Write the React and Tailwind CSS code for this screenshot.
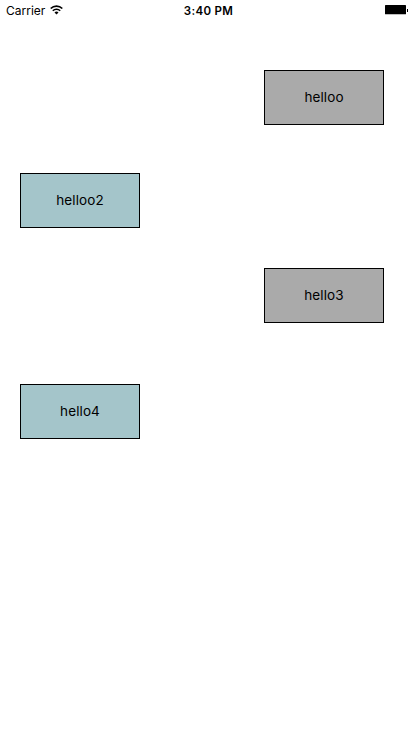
const boxes = [
  { text: 'helloo', cls: 'mt-[50px] ml-[264px] bg-[#aaaaaa]' },
  { text: 'helloo2', cls: 'mt-12 ml-5 bg-[#a4c5ca]' },
  { text: 'hello3', cls: 'mt-10 ml-[264px] bg-[#aaaaaa]' },
  { text: 'hello4', cls: 'mt-[61px] ml-5 bg-[#a4c5ca]' },
];

function Wifi() {
  return (
    <svg className="ml-[5px]" width="13" height="10" viewBox="0 0 13 10" fill="none" stroke="#000">
      <path d="M.7 3.5a8.3 8.3 0 0 1 11.6 0" strokeWidth="1.7" />
      <path d="M2.8 5.8a5.3 5.3 0 0 1 7.4 0" strokeWidth="1.6" />
      <path d="M6.5 9.4 4.5 7.4a2.9 2.9 0 0 1 4 0Z" fill="#000" stroke="none" />
    </svg>
  );
}

export default function App() {
  return (
    <div className="h-[736px] w-[414px] overflow-hidden bg-white font-['Inter',sans-serif] text-black">
      <header className="grid h-5 w-[408px] grid-cols-[1fr_auto_1fr] items-center overflow-hidden pl-1.5 text-[12px] leading-5">
        <div className="flex items-center">
          <span className="pt-px leading-[19px]">Carrier</span>
          <Wifi />
        </div>
        <span className="pt-0.5 pl-[3px] text-[11.5px] font-semibold leading-[18px] tracking-[0.3px]">3:40 PM</span>
        <svg className="justify-self-end" width="23" height="10" viewBox="0 0 23 10">
          <rect x="0" y="0" width="21" height="9.3" rx="0.6" />
          <rect x="22" y="4" width="1" height="3" />
        </svg>
      </header>
      <main className="flex flex-col items-start">
        {boxes.map((b) => (
          <div key={b.text} className={`flex h-[55px] w-[120px] items-center justify-center border border-black text-[13.5px] tracking-[0.1px] ${b.cls}`}>
            {b.text}
          </div>
        ))}
      </main>
    </div>
  );
}
